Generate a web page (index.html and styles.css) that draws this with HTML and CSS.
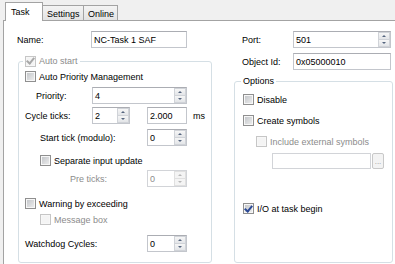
FILE: index.html
```html
<!DOCTYPE html>
<html lang="en">
<head>
    <meta charset="UTF-8">
    <title>Task</title>
    <link rel="stylesheet" href="styles.css">
</head>
<body>
    <div class="tabs">
        <div class="tab tab-task active">Task</div>
        <div class="tab tab-settings">Settings</div>
        <div class="tab tab-online">Online</div>
    </div>

    <div class="panel">
        <!-- left side -->
        <div class="col col-left">
            <div class="row row-name">
                <span class="lbl lbl-name">Name:</span>
                <div class="field field-name">NC-Task 1 SAF</div>
            </div>

            <fieldset class="group group-left">
                <legend class="legend-left">
                    <span class="check checked disabled"></span>
                    <span class="dim">Auto start</span>
                </legend>

                <div class="crow crow-apm">
                    <span class="check"></span>
                    <span>Auto Priority Management</span>
                </div>

                <div class="row row-priority">
                    <span class="lbl lbl-short indent-1">Priority:</span>
                    <div class="field field-wide">4<span class="spin"><i class="up"></i><i class="down"></i></span></div>
                </div>

                <div class="row row-cycle">
                    <span class="lbl lbl-short">Cycle ticks:</span>
                    <div class="field field-ticks">2<span class="spin"><i class="up"></i><i class="down"></i></span></div>
                    <div class="field field-ms">2.000</div>
                    <span class="unit">ms</span>
                </div>

                <div class="row row-start">
                    <span class="lbl lbl-long indent-2">Start tick (modulo):</span>
                    <div class="field field-small">0<span class="spin"><i class="up"></i><i class="down"></i></span></div>
                </div>

                <div class="crow crow-sep indent-2">
                    <span class="check"></span>
                    <span>Separate input update</span>
                </div>

                <div class="row row-pre">
                    <span class="lbl lbl-long indent-3 dim">Pre ticks:</span>
                    <div class="field field-small disabled">0<span class="spin"><i class="up"></i><i class="down"></i></span></div>
                </div>

                <div class="crow crow-warn">
                    <span class="check"></span>
                    <span>Warning by exceeding</span>
                </div>

                <div class="crow crow-msg indent-2">
                    <span class="check disabled"></span>
                    <span class="dim">Message box</span>
                </div>

                <div class="row row-watchdog">
                    <span class="lbl lbl-long">Watchdog Cycles:</span>
                    <div class="field field-small">0<span class="spin"><i class="up"></i><i class="down"></i></span></div>
                </div>
            </fieldset>
        </div>

        <!-- right side -->
        <div class="col col-right">
            <div class="row row-name">
                <span class="lbl lbl-right">Port:</span>
                <div class="field field-right">501<span class="spin"><i class="up"></i><i class="down"></i></span></div>
            </div>

            <div class="row row-objid">
                <span class="lbl lbl-right">Object Id:</span>
                <div class="field field-right">0x05000010</div>
            </div>

            <fieldset class="group group-right">
                <legend class="legend-right">Options</legend>

                <div class="crow crow-disable">
                    <span class="check"></span>
                    <span>Disable</span>
                </div>

                <div class="crow crow-symbols">
                    <span class="check"></span>
                    <span>Create symbols</span>
                </div>

                <div class="crow crow-ext">
                    <span class="check disabled"></span>
                    <span class="dim">Include external symbols</span>
                </div>

                <div class="row row-path">
                    <div class="field field-path disabled"></div>
                    <span class="dots">...</span>
                </div>

                <div class="crow crow-io">
                    <span class="check checked"></span>
                    <span>I/O at task begin</span>
                </div>
            </fieldset>
        </div>
    </div>
</body>
</html>
```

FILE: styles.css
```css
body {
    margin: 0;
    height: 264px;
    overflow: hidden;
    background-color: #f0f0f0;
    font-family: "Liberation Sans", Arial, sans-serif;
    font-size: 9px;
    color: #000;
}

/* tabs */
.tabs {
    display: flex;
    align-items: flex-end;
    height: 18px;
    padding: 2px 0 0 5px;
}
.tab {
    box-sizing: border-box;
    height: 15px;
    padding: 3px 0 0 4px;
    margin-left: -1px;
    border: 1px solid #a3a3a3;
    border-bottom: none;
    background: linear-gradient(#f4f4f4, #e3e3e3);
    line-height: 10px;
}
.tab-task {
    width: 38px;
    margin-left: 0;
}
.tab-settings {
    width: 42px;
}
.tab-online {
    width: 35px;
}
.tab.active {
    position: relative;
    z-index: 1;
    height: 19px;
    margin-bottom: -1px;
    padding: 4px 0 0 5px;
    background: #fff;
}

/* panel */
.panel {
    display: flex;
    gap: 22px;
    height: 233px;
    margin-left: 3px;
    padding: 10px 0 0 13px;
    border-left: 1px solid #a3a3a3;
    border-top: 1px solid #a3a3a3;
    background-color: #fff;
}
.col {
    display: flex;
    flex-direction: column;
}
.col-left {
    width: 195px;
}
.col-right {
    width: 159px;
}

/* rows */
.row {
    display: flex;
    align-items: center;
    height: 17px;
    flex-shrink: 0;
}
.crow {
    display: flex;
    align-items: center;
    gap: 3px;
    height: 13px;
    flex-shrink: 0;
}
.lbl {
    box-sizing: border-box;
    flex-shrink: 0;
}
.lbl-name {
    width: 74px;
}
.lbl-short {
    width: 67px;
}
.lbl-long {
    width: 122px;
}
.lbl-right {
    width: 59px;
    padding-left: 8px;
}
.indent-1 {
    padding-left: 11px;
}
.indent-2 {
    padding-left: 15px;
}
.indent-3 {
    padding-left: 45px;
}
.dim {
    color: #8c8c8c;
}

/* text fields */
.field {
    box-sizing: border-box;
    display: flex;
    align-items: center;
    height: 17px;
    padding-left: 2px;
    border: 1px solid #c3c6cc;
    border-top-color: #abadb3;
    background-color: #fff;
    flex-shrink: 0;
}
.field.disabled {
    color: #8c8c8c;
    border-color: #d2d4d8;
}
.field-name {
    width: 96px;
}
.field-wide {
    width: 95px;
}
.field-ticks {
    width: 38px;
}
.field-ms {
    width: 40px;
    margin-left: 17px;
}
.field-small {
    width: 40px;
}
.field-right {
    width: 98px;
}
.field-path {
    width: 99px;
    height: 16px;
    margin-left: 29px;
}
.unit {
    margin-left: 6px;
}
.dots {
    box-sizing: border-box;
    width: 14px;
    height: 16px;
    margin-left: 1px;
    border: 1px solid #c8c8c8;
    border-radius: 2px;
    background-color: #f3f3f3;
    color: #9a9a9a;
    font-size: 8px;
    line-height: 16px;
    text-align: center;
}

/* spinner */
.spin {
    display: flex;
    flex-direction: column;
    width: 12px;
    height: 15px;
    margin-left: auto;
}
.spin i {
    flex: 1;
    display: flex;
    align-items: center;
    justify-content: center;
    border: 1px solid #d0d3d8;
    background: linear-gradient(#f6f6f6, #e3e5e8);
}
.spin .up {
    border-bottom-width: 0;
}
.spin .up::after {
    content: "";
    border-left: 2px solid transparent;
    border-right: 2px solid transparent;
    border-bottom: 2px solid #55657e;
}
.spin .down::after {
    content: "";
    border-left: 2px solid transparent;
    border-right: 2px solid transparent;
    border-top: 2px solid #55657e;
}
.disabled .spin i {
    border-color: #e0e0e0;
    background: #f4f4f4;
}
.disabled .spin i::after {
    border-top-color: #b8b8b8;
    border-bottom-color: #b8b8b8;
}

/* checkboxes */
.check {
    box-sizing: border-box;
    display: flex;
    align-items: center;
    justify-content: center;
    width: 11px;
    height: 11px;
    border: 1px solid #8f8f8f;
    box-shadow: inset 0 0 0 1px #f7f7f7;
    background: linear-gradient(135deg, #bfc2c6, #f0f0f0);
    flex-shrink: 0;
}
.check.disabled {
    border-color: #c6c6c6;
    background: #f4f4f4;
}
.check.checked::after {
    content: "";
    width: 3px;
    height: 6px;
    margin-top: -2px;
    border-right: 2px solid #2c4a96;
    border-bottom: 2px solid #2c4a96;
    transform: rotate(40deg);
}
.check.checked.disabled::after {
    border-color: #a8a8a8;
}

/* group boxes */
.group {
    box-sizing: border-box;
    margin: 0;
    border: 1px solid #d5dfe5;
    border-radius: 3px;
    min-width: 0;
}
.group legend {
    display: flex;
    align-items: center;
    gap: 3px;
    height: 12px;
    padding: 0 2px;
    margin-left: -2px;
}
.group-left {
    width: 194px;
    margin: 7px 0 0 1px;
    padding: 0 6px 10px 6px;
}
.group-right {
    width: 159px;
    margin-top: 5px;
    padding: 0 8px 47px 8px;
}
.legend-right {
    margin-left: -3px;
}

/* vertical spacing of the left group */
.crow-apm { margin-top: 3px; }
.row-priority { margin-top: 4px; }
.row-cycle { margin-top: 3px; }
.row-start { margin-top: 5px; }
.crow-sep { margin-top: 8px; }
.row-pre { margin-top: 3px; }
.crow-warn { margin-top: 10px; }
.crow-msg { margin-top: 3px; }
.row-watchdog { margin-top: 9px; }

/* vertical spacing of the right column */
.row-objid { margin-top: 5px; }
.crow-disable { margin-top: 6px; }
.crow-symbols { margin-top: 8px; }
.crow-ext { margin-top: 8px; padding-left: 13px; }
.row-path { margin-top: 4px; }
.crow-io { margin-top: 33px; }
```
